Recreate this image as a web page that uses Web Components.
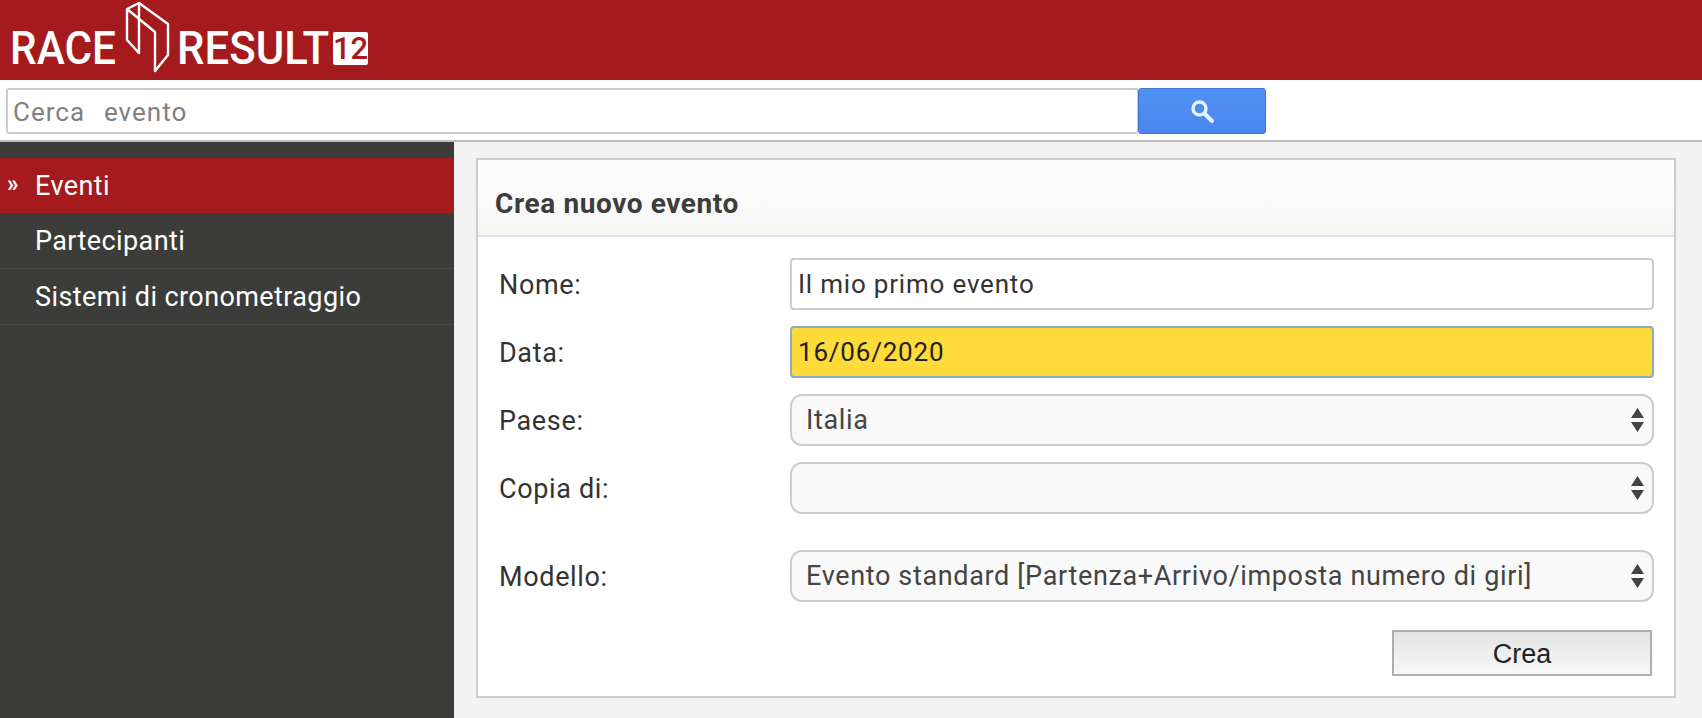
<!DOCTYPE html>
<html>
  <head>
    <title>Crea nuovo evento</title>
    <style>
      html, body { margin: 0; height: 100%; }
      body { font-family: Roboto, "Liberation Sans", sans-serif; height: 718px; overflow: hidden; display: flex; flex-direction: column; }
    </style>
  </head>
  <body>
    <template id="rr-header-template">
      <style>
        :host { display: block; height: 80px; background: #a51a1c; color: #fff; overflow: hidden; }
        .logo { display: flex; align-items: flex-start; height: 80px; }
        svg { display: block; flex: none; }
        .word { font: 500 46px/1 Roboto, sans-serif; margin-top: 25px; transform-origin: left top; white-space: nowrap; }
        .race { margin-left: 10px; width: 107px; transform: scaleX(.92); }
        .result { width: 155px; transform: scaleX(.95); }
        .num { background: #fff; color: #a51a1c; font: 500 31px/34px Roboto, sans-serif; width: 35px; height: 33px; margin: 32px 0 0 1px; text-align: center; border-radius: 2px; }
      </style>
      <div class="logo">
        <span class="word race">RACE</span>
        <svg viewBox="117 0 60 76" width="60" height="76" fill="none" stroke="#fff" stroke-width="2.4" stroke-linejoin="round">
          <path d="M127 9 L139 3 L168 24 V55 L155 71 V32 Z"/>
          <path d="M127 9 V40 L139 53 V3"/>
        </svg>
        <span class="word result">RESULT</span>
        <span class="num">12</span>
      </div>
    </template>

    <template id="rr-search-template">
      <style>
        :host { display: flex; height: 52px; background: #fff; border-bottom: 2px solid #bdbdbd; padding: 8px 0 0 6px; }
        input { width: 1132px; height: 46px; box-sizing: border-box; border: 2px solid #ccc; border-right-width: 1px; border-radius: 3px 0 0 3px; padding: 2px 5px 0; font: 26px Roboto, sans-serif; letter-spacing: 1px; word-spacing: 2px; outline: 0; }
        input::placeholder { color: #808080; opacity: 1; }
        button { width: 128px; height: 46px; padding: 0; border: 1px solid #3f76d4; border-radius: 3px; background: linear-gradient(#5090f3, #4a86ec); display: flex; align-items: center; justify-content: center; }
      </style>
      <input placeholder="Cerca  evento">
      <button>
        <svg width="28" height="28" viewBox="0 0 28 28" fill="none" stroke="#e4f4ff">
          <circle cx="11.5" cy="11.5" r="6.5" stroke-width="3.4"/>
          <path d="M16.5 16.5 L24 24" stroke-width="4" stroke-linecap="round"/>
        </svg>
      </button>
    </template>

    <template id="rr-side-menu-template">
      <style>
        :host { display: block; width: 454px; flex: none; background: #3c3c3b; padding-top: 16px; box-sizing: border-box; }
      </style>
      <slot></slot>
    </template>

    <template id="rr-menu-item-template">
      <style>
        :host { display: block; height: 56px; box-sizing: border-box; border-bottom: 1px solid #474746; color: #fff; font-size: 27px; letter-spacing: .4px; line-height: 57px; padding-left: 35px; position: relative; }
        :host([active]) { background: #a51a1c; height: 55px; border-bottom: 0; }
        :host([active])::before { content: "»"; position: absolute; left: 7px; top: -2px; font-size: 23px; font-weight: 700; }
      </style>
      <slot></slot>
    </template>

    <template id="rr-card-template">
      <style>
        :host { display: block; margin: 16px 26px 20px 22px; background: #fff; border: 2px solid #ccc; flex: 1; }
        h2 { margin: 0; height: 77px; box-sizing: border-box; border-bottom: 2px solid #e1e4f0; padding: 0 0 0 17px; font: 700 28px/88px Roboto, sans-serif; letter-spacing: .6px; color: #3c3c3b; background: linear-gradient(#fdfdfd, #f7f7f7); }
        .body { padding: 21px 20px 0 21px; display: flex; flex-direction: column; }
      </style>
      <h2><slot name="title"></slot></h2>
      <div class="body"><slot></slot></div>
    </template>

    <template id="rr-field-template">
      <style>
        :host { display: grid; grid-template-columns: 291px 1fr; align-items: center; height: 52px; margin-bottom: 16px; color: #333; font-size: 27px; letter-spacing: .65px; }
        :host([gap]) { margin-top: 20px; }
        label { padding-top: 2px; }
        .box { height: 52px; box-sizing: border-box; border: 2px solid #ccc; border-radius: 4px; padding: 0 6px; font-size: 26px; letter-spacing: .8px; line-height: 48px; background: #fff; position: relative; white-space: nowrap; }
        :host([highlight]) .box { background: #ffdb3a; border-color: #8cabcc; color: #222; }
        :host([select]) .box { background: #f9f9f9; border-radius: 12px; padding-left: 14px; color: #444; font-size: 27px; letter-spacing: .65px; }
        svg { position: absolute; right: 8px; top: 12px; display: none; }
        :host([select]) svg { display: block; }
      </style>
      <label><slot name="label"></slot></label>
      <div class="box"><slot></slot>
        <svg width="13" height="24" viewBox="0 0 13 24" fill="#444"><path d="M6.5 0 L13 10 H0 Z M0 14 H13 L6.5 24 Z"/></svg>
      </div>
    </template>

    <template id="rr-button-template">
      <style>
        :host { display: block; align-self: flex-end; width: 260px; height: 46px; margin: 12px 2px 0 0; box-sizing: border-box; border: 2px solid #aeaeae; background: linear-gradient(#e4e4e4, #f7f7f7); font: 27px/44px "Liberation Sans", Arial, sans-serif; color: #222; text-align: center; }
      </style>
      <slot></slot>
    </template>

    <template id="rr-layout-template">
      <style>
        :host { display: flex; flex: 1; min-height: 0; background: #f2f2f2; }
      </style>
      <slot></slot>
    </template>

    <rr-header></rr-header>
    <rr-search></rr-search>
    <rr-layout>
      <rr-side-menu>
        <rr-menu-item active>Eventi</rr-menu-item>
        <rr-menu-item>Partecipanti</rr-menu-item>
        <rr-menu-item>Sistemi di cronometraggio</rr-menu-item>
      </rr-side-menu>
      <rr-card>
        <span slot="title">Crea nuovo evento</span>
        <rr-field><span slot="label">Nome:</span>Il mio primo evento</rr-field>
        <rr-field highlight><span slot="label">Data:</span>16/06/2020</rr-field>
        <rr-field select><span slot="label">Paese:</span>Italia</rr-field>
        <rr-field select><span slot="label">Copia di:</span></rr-field>
        <rr-field select gap><span slot="label">Modello:</span>Evento standard [Partenza+Arrivo/imposta numero di giri]</rr-field>
        <rr-button>Crea</rr-button>
      </rr-card>
    </rr-layout>

    <script>
    // every element just clones its own template into an open shadow root
    ['rr-header', 'rr-search', 'rr-side-menu', 'rr-menu-item', 'rr-card', 'rr-field', 'rr-button', 'rr-layout'].forEach(function (name) {
      customElements.define(name, class extends HTMLElement {
        constructor() {
          super();
          var template = document.getElementById(name + '-template').content;
          this.attachShadow({mode: 'open'}).appendChild(template.cloneNode(true));
        }
      });
    });
    </script>
  </body>
</html>
